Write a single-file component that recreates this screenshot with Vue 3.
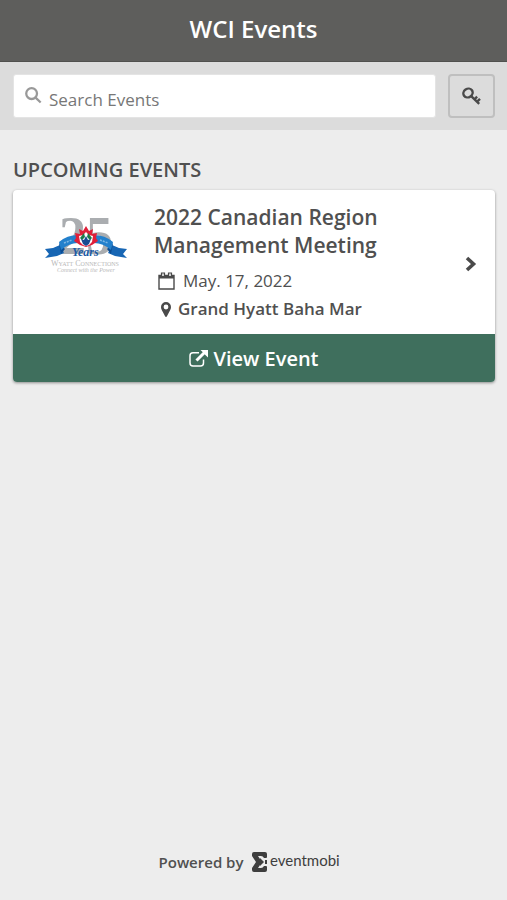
<script setup>
import { computed, ref } from 'vue'

const search = ref('')

const events = [
  {
    id: 1,
    name: '2022 Canadian Region Management Meeting',
    date: 'May. 17, 2022',
    place: 'Grand Hyatt Baha Mar',
  },
]

const filtered = computed(() => {
  const q = search.value.trim().toLowerCase()
  return events.filter(e => e.name.toLowerCase().includes(q))
})
</script>

<template>
  <div class="page">
    <header class="topbar">
      <h1>WCI Events</h1>
    </header>

    <form class="searchbar" @submit.prevent>
      <label class="search-box">
        <svg class="icon-search" viewBox="0 0 18 18" aria-hidden="true">
          <circle cx="7" cy="7" r="5.7" />
          <path d="M11.2 11.2l5.400 5.200" />
        </svg>
        <input v-model="search" type="text" placeholder="Search Events" aria-label="Search Events">
      </label>
      <button type="button" class="key-btn" aria-label="Access code">
        <svg viewBox="0 0 20 18" aria-hidden="true">
          <ellipse cx="6" cy="6" rx="4.800" ry="4.200" transform="rotate(-35 6 6)" />
          <path d="M9.200 9.200l8 7.600M12.500 12.300l2.600-2.600M15.200 14.600l2.800-2.800" />
        </svg>
      </button>
    </form>

    <main class="content">
      <h2>UPCOMING EVENTS</h2>

      <article v-for="e in filtered" :key="e.id" class="card">
        <div class="card-body">
          <svg class="logo" viewBox="0 -8 84 68" role="img" aria-label="Wyatt Connections 25 Years">
            <text class="logo-num" x="15" y="41" font-size="54">25</text>
            <!-- ribbon tails -->
            <path fill="#1766b4" d="M1 36l8-1 7-3 4 8-7 3-12 2 4-4zM83 36l-8-1-7-3-4 8 7 3 12 2-4-4z" />
            <path fill="#0b4c93" d="M15 30l6 6-4 5zM69 30l-6 6 4 5z" />
            <!-- ribbon arms -->
            <path fill="#2380cc" d="M15 29q8-7 19-7v8q-9 0-17 7zM69 29q-8-7-19-7v8q9 0 17 7z" />
            <path stroke="#7bb5e3" stroke-width="1.5" stroke-dasharray="2 1" fill="none" d="M20 30l8-3M56 27l8 3" />
            <!-- maple leaf -->
            <path fill="#e01f39" d="M42 13l3 5 4-2-1 5 5-1-1 5 2 3-6 4-6 2-6-2-6-4 2-3-1-5 5 1-1-5 4 2z" />
            <path fill="#fff" d="M42 19l3 3 4 1-1 6-3 3-3 1-3-1-3-3-1-6 4-1z" />
            <path fill="#1c7a4a" d="M40 20l-4 5 2 2 3-3zM44 20l4 5-2 2-3-3z" />
            <path fill="#174b91" d="M42 23l2 4 3-1-2 5-3 2-3-2-2-5 3 1z" />
            <text class="logo-years" x="28" y="43" font-size="12">Years</text>
            <text class="logo-name" x="7" y="53" font-size="8">Wyatt Connections</text>
            <text class="logo-tag" x="13" y="59" font-size="6">Connect with the Power</text>
          </svg>

          <div class="info">
            <h3>{{ e.name }}</h3>
            <p class="date">
              <svg viewBox="0 0 17 18" aria-hidden="true">
                <path class="line" d="M1 3.500h15v13.500H1z" />
                <path d="M1 3h15v3.500H1z" />
                <path class="ring" d="M3.500 1h3v3.500h-3zM10.500 1h3v3.500h-3z" />
              </svg>
              {{ e.date }}
            </p>
            <p class="place">
              <svg viewBox="0 0 10 15" aria-hidden="true">
                <path fill-rule="evenodd" d="M5 0a5 5 0 0 1 5 5c0 2-1 3.300-1.700 4.800L5.800 14.400a.9.9 0 0 1-1.600 0L1.700 9.800C1 8.300 0 7 0 5a5 5 0 0 1 5-5zm0 2.600a2.400 2.400 0 1 0 0 4.800 2.400 2.400 0 0 0 0-4.800z" />
              </svg>
              {{ e.place }}
            </p>
          </div>

          <svg class="chevron" viewBox="0 0 12 16" aria-hidden="true">
            <path d="M2 2l6.500 6L2 14" />
          </svg>
        </div>

        <a href="#" class="view-btn">
          <svg viewBox="0 0 19 17" aria-hidden="true">
            <path class="line" d="M10 2.700H4a3 3 0 0 0-3 3V13a3 3 0 0 0 3 3h7.500a3 3 0 0 0 3-3V9.500" />
            <path class="arrow" d="M7.500 10.500l8-8" />
            <path d="M11.500 0H19v7.500l-2.600-2.500-2.300-2.400z" />
          </svg>
          View Event
        </a>
      </article>
    </main>

    <footer class="footer">
      <span>Powered by</span>
      <svg class="brand" viewBox="0 0 88 20" role="img" aria-label="eventmobi">
        <path d="M2 0h11q2 0 2 2v3q0 1-1 1h-2q-1-2-3-2H6l4 6-4 6h3q2 0 3-2h2q1 0 1 1v3q0 2-2 2H2q-2 0-2-2v-2l4-6-4-6V2q0-2 2-2z" />
        <path d="M8 6l4 4-4 4zM13 8h2v4h-2z" />
        <text x="18" y="14" font-size="15">eventmobi</text>
      </svg>
    </footer>
  </div>
</template>

<style>
body { margin: 0; background: #ededed; }
</style>

<style scoped>
.page {
  display: flex; flex-direction: column; min-height: 100vh;
  background: #ededed; color: #505050;
  font-family: "Open Sans", "Noto Sans", sans-serif;
}
h1, h2, h3, p { margin: 0; }
svg { flex: none; }

/* header */
.topbar {
  box-sizing: border-box; height: 62px; padding-bottom: 4px;
  display: flex; align-items: center; justify-content: center;
  background: #5e5e5c; border-bottom: 1px solid #50504e;
}
h1 { color: #fff; font-size: 24px; line-height: 32px; font-weight: 600; }

/* search */
.searchbar { display: flex; gap: 12px; padding: 12px 12px 12px 13px; background: #dcdcdc; }
.search-box {
  flex: 1; min-width: 0; display: flex; align-items: center; gap: 7px;
  padding-left: 11px; background: #fff; border: 1px solid #e4e4e4; border-radius: 3px;
}
.icon-search { width: 17px; height: 17px; margin-bottom: 2px; fill: none; stroke: #999; stroke-width: 2.4; }
.search-box input {
  flex: 1; min-width: 0; padding: 8px 0 0; border: 0; outline: 0; background: none;
  font: 400 17px/24px "Open Sans", sans-serif; color: #4a4a4a;
}
.search-box input::placeholder { color: #777; opacity: 1; }
.key-btn {
  display: flex; align-items: center; justify-content: center;
  width: 47px; height: 44px; padding: 0;
  background: #dcdcdc; border: 2px solid #bfbfbf; border-radius: 4px;
}
.key-btn svg { width: 20px; height: 18px; fill: none; stroke: #4a4a4a; stroke-width: 2.4; }

/* events */
.content { flex: 1; padding: 26px 12px 0 13px; }
h2 { font-size: 20px; line-height: 28px; font-weight: 600; margin-bottom: 6px; }
.card { overflow: hidden; background: #fff; border-radius: 4px; box-shadow: 0 1px 3px rgba(0, 0, 0, .4); margin-bottom: 16px; }
.card-body { display: flex; padding: 13px 18px 11px 31px; }
.logo { width: 84px; height: 68px; margin: 2px 26px 0 0; }
.logo-num { font-family: "Liberation Serif", serif; font-weight: 700; fill: #aaadb0; }
.logo-years { font-family: "Liberation Serif", serif; font-style: italic; font-weight: 700; fill: #1c5ba5; }
.logo-name { font-family: "Liberation Serif", serif; font-variant: small-caps; fill: #b8b8b8; }
.logo-tag { font-family: "Liberation Serif", serif; font-style: italic; fill: #b8b8b8; }
.info { flex: 1; min-width: 0; }
h3 { max-width: 260px; font-size: 21px; line-height: 28px; font-weight: 600; }
.date, .place { display: flex; align-items: center; line-height: 28px; }
.date { gap: 8px; margin-top: 8px; padding-left: 4px; font-size: 17px; }
.place { gap: 7px; padding-left: 7px; font-size: 17px; font-weight: 600; }
.date svg { width: 17px; height: 18px; fill: #4a4a4a; }
.date .line { fill: none; stroke: #4a4a4a; stroke-width: 1.4; }
.date .ring { fill: #ddd; stroke: #4a4a4a; stroke-width: 1.2; }
.place svg { width: 10px; height: 15px; fill: #4a4a4a; }
.chevron { width: 12px; height: 16px; align-self: center; margin-top: 2px; fill: none; stroke: #4a4a4a; stroke-width: 3.6; }
.view-btn {
  display: flex; align-items: center; justify-content: center; gap: 5px;
  height: 48px; background: #3f6f5d; color: #fff;
  font-size: 20px; font-weight: 600; text-decoration: none;
}
.view-btn svg { width: 19px; height: 17px; fill: #fff; }
.view-btn .line { fill: none; stroke: #fff; stroke-width: 1.5; }
.view-btn .arrow { stroke: #fff; stroke-width: 3; }

/* footer */
.footer { display: flex; align-items: center; justify-content: center; gap: 9px; padding: 0 8px 26px 0; font-size: 15px; line-height: 24px; font-weight: 600; }
.brand { width: 88px; height: 20px; fill: #3e3e3e; }
.brand text { font-family: Lato, sans-serif; font-weight: 400; }
</style>
